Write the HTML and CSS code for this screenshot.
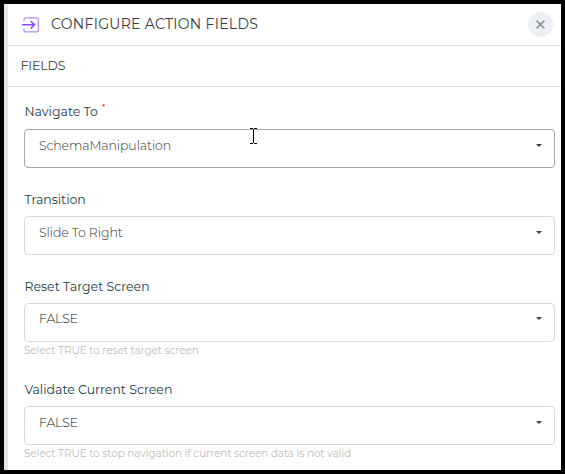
FILE: index.html
```html
<!DOCTYPE html>
<html lang="en">
<head>
<meta charset="utf-8">
<title>Configure Action Fields</title>
<link rel="stylesheet" href="styles.css">
</head>
<body>
<main class="panel">
  <header class="header">
    <svg class="header-icon" width="18" height="16" viewBox="0 0 18 16" fill="none">
      <path d="M2 4V2.3Q2 .8 3.5 .8H14.8Q16.3 .8 16.3 2.3V13.3Q16.3 14.8 14.8 14.8H3.5Q2 14.8 2 13.3V11.5" stroke="#b18cf8" stroke-width="1.3"/>
      <path d="M0 7.8H12M8.8 4.1L12.5 7.8L8.8 11.5" stroke="#8b45f5" stroke-width="1.6"/>
    </svg>
    <h1 class="title">CONFIGURE ACTION FIELDS</h1>
    <button class="close" aria-label="Close">
      <svg width="9" height="9" viewBox="0 0 9 9"><path d="M.6 .6L8.4 8.4M8.4 .6L.6 8.4" stroke="#84969e" stroke-width="1.6"/></svg>
    </button>
  </header>
  <h2 class="section">FIELDS</h2>
  <form class="fields">
    <div class="field">
      <div class="label label-first">Navigate To<span class="required">*</span></div>
      <div class="select select-active"><span class="value">SchemaManipulation</span><i class="caret"></i></div>
    </div>
    <div class="field">
      <div class="label">Transition</div>
      <div class="select"><span class="value">Slide To Right</span><i class="caret"></i></div>
    </div>
    <div class="field field-hinted">
      <div class="label">Reset Target Screen</div>
      <div class="select select-dark"><span class="value">FALSE</span><i class="caret"></i></div>
      <div class="hint">Select TRUE to reset target screen</div>
    </div>
    <div class="field field-hinted">
      <div class="label">Validate Current Screen</div>
      <div class="select select-dark select-last"><span class="value">FALSE</span><i class="caret"></i></div>
      <div class="hint">Select TRUE to stop navigation if current screen data is not valid</div>
    </div>
  </form>
  <svg class="cursor" width="7" height="17" viewBox="0 0 7 17"><path d="M0 .5H3M4 .5H7M3.5 1V15M0 15.5H3M4 15.5H7" stroke="#000" fill="none"/></svg>
</main>
</body>
</html>
```

FILE: styles.css
```css
* { box-sizing: border-box; }
body { margin: 0; background: #000; font-family: Montserrat, Inter, sans-serif; }
.panel { position: relative; width: 565px; height: 474px; border: 4px solid #000; padding-left: 4px; background: linear-gradient(to right, #e6e6e6 4px, #fff 4px); overflow: hidden; }
.header { display: flex; align-items: center; height: 42px; padding: 0 8px 0 14px; border-bottom: 1px solid #dcdcdc; }
.header-icon { display: block; margin-right: 11px; }
.title { flex: 1; margin: 0; padding-bottom: 1px; font-size: 14px; font-weight: 400; color: #3c3c3c; letter-spacing: .3px; white-space: nowrap; }
.close { display: flex; align-items: center; justify-content: center; width: 25px; height: 25px; padding: 0; border: 0; border-radius: 50%; background: #ecf0f5; }
.section { display: flex; align-items: center; height: 41px; margin: 0; padding: 0 0 2px 12.5px; border-bottom: 1px solid #dcdcdc; font-size: 12.5px; font-weight: 400; color: #404040; letter-spacing: -.1px; }
.fields { padding: 14px 6px 0 16px; }
.field { height: 87px; }
.field-hinted { height: 103px; }
.label { height: 28px; padding-left: .4px; line-height: 23px; font-size: 12.5px; color: #233b4b; white-space: nowrap; }
.label-first { line-height: 21px; }
.required { margin-left: 4px; color: #f22; font-size: 8px; font-weight: 500; vertical-align: 6px; line-height: 0; }
.select { display: flex; justify-content: space-between; align-items: flex-start; height: 39px; padding: 6px 12px 0 14px; border: 1px solid #dadada; border-radius: 4px; color: #333; }
.select-active { border-color: #a8a8a8; }
.select-dark { color: #111; padding-top: 5px; }
.select-last { padding-top: 6px; }
.value { font-size: 12.5px; font-weight: 300; line-height: 20px; letter-spacing: -.08px; white-space: nowrap; }
.caret { margin-top: 8px; border: 3px solid transparent; border-top-color: #404040; border-bottom: 0; }
.hint { line-height: 17px; font-size: 10.5px; letter-spacing: -.12px; color: #bdbdbd; white-space: nowrap; }
.cursor { position: absolute; left: 246px; top: 124px; }
```
